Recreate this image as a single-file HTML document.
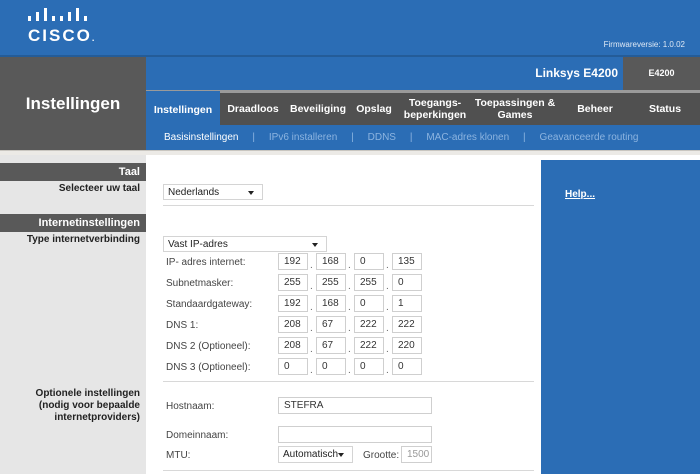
<!DOCTYPE html>
<html><head><meta charset="utf-8"><style>
*{margin:0;padding:0;box-sizing:border-box}
body{width:700px;height:474px;overflow:hidden;background:#fff;font-family:"Liberation Sans",Arial,sans-serif;position:relative}
.a{position:absolute}
.top{left:0;top:0;width:700px;height:55px;background:#2b6db5}
.inp{position:absolute;height:17px;border:1px solid #cfcfcf;background:#fff;font-size:10px;color:#333;padding:2px 0 0 5px}
.lbl{position:absolute;left:166px;font-size:10px;color:#444}
.dot{position:absolute;font-size:10px;color:#666}
.sel{position:absolute;height:16px;border:1px solid #d4d4d4;background:#fff;font-size:10px;color:#222;padding:2px 0 0 4px}
.sel:after{content:"";position:absolute;right:8px;top:6px;border:3px solid transparent;border-top:4px solid #222}
.hr{position:absolute;left:163px;width:371px;height:1px;background:#d8d8d8}
.nav{position:absolute;top:93px;height:32px;color:#fff;font-weight:bold;font-size:10.5px;text-align:center;display:flex;align-items:center;justify-content:center;line-height:12px}
</style></head><body>
<div class="a top"></div>
<div class="a" style="left:26px;top:7px;color:#fff">
<svg width="70" height="16" viewBox="0 0 70 16"><g fill="#fff"><rect x="2" y="9" width="3" height="5"/><rect x="10" y="5" width="3" height="9"/><rect x="18" y="1" width="3" height="13"/><rect x="26" y="9" width="3" height="5"/><rect x="34" y="9" width="3" height="5"/><rect x="42" y="5" width="3" height="9"/><rect x="50" y="1" width="3" height="13"/><rect x="58" y="9" width="3" height="5"/></g></svg>
<div style="font-size:17px;font-weight:bold;letter-spacing:2px;margin-top:-2px;margin-left:2px">CISCO<span style="font-size:9px">.</span></div></div>
<div class="a" style="right:15px;top:40px;font-size:8px;color:#dfe9f5">Firmwareversie: 1.0.02</div>
<div class="a" style="left:0;top:55px;width:700px;height:2px;background:#245c98"></div>
<div class="a" style="left:0;top:57px;width:146px;height:93px;background:#595959"></div>
<div class="a" style="left:0;top:94px;width:146px;text-align:center;color:#fff;font-weight:bold;font-size:17px">Instellingen</div>
<div class="a" style="left:146px;top:57px;width:477px;height:34px;background:#2b6db5"></div>
<div class="a" style="left:623px;top:57px;width:77px;height:34px;background:#595959;color:#fff;font-size:9px;font-weight:bold;text-align:center;line-height:32px">E4200</div>
<div class="a" style="left:450px;top:66px;width:168px;text-align:right;color:#fff;font-weight:bold;font-size:12px">Linksys E4200</div>
<div class="a" style="left:146px;top:90px;width:554px;height:3px;background:#9a9a9a"></div>
<div class="a" style="left:146px;top:93px;width:554px;height:32px;background:#505050"></div>
<div class="nav" style="left:146px;width:74px;background:#2b6db5;top:91px;height:34px;padding-top:4px">Instellingen</div>
<div class="nav" style="left:222px;width:62px">Draadloos</div>
<div class="nav" style="left:286px;width:64px">Beveiliging</div>
<div class="nav" style="left:352px;width:44px">Opslag</div>
<div class="nav" style="left:400px;width:70px">Toegangs-<br>beperkingen</div>
<div class="nav" style="left:472px;width:86px">Toepassingen &amp;<br>Games</div>
<div class="nav" style="left:560px;width:70px">Beheer</div>
<div class="nav" style="left:632px;width:66px">Status</div>
<div class="a" style="left:146px;top:125px;width:554px;height:25px;background:#2b6db5;font-size:10px;color:#8cb4e0;line-height:25px;padding-left:18px;white-space:pre"><span style="color:#fff">Basisinstellingen</span>     |     IPv6 installeren     |     DDNS     |     MAC-adres klonen     |     Geavanceerde routing</div>
<div class="a" style="left:0;top:150px;width:700px;height:5px;background:#eceae6;border-top:1px solid #c9c6c0"></div>
<div class="a" style="left:0;top:155px;width:146px;height:319px;background:#e6e6e6"></div>
<div class="a" style="left:541px;top:160px;width:159px;height:314px;background:#2b6db5"></div>
<div class="a" style="left:565px;top:189px;font-size:10px;font-weight:bold;color:#fff;text-decoration:underline">Help...</div>
<div class="a" style="left:0;top:163px;width:146px;height:18px;background:#595959;color:#fff;font-weight:bold;font-size:11px;text-align:right;padding:3px 6px 0 0">Taal</div>
<div class="a" style="left:0;top:183px;width:140px;text-align:right;font-size:10px;font-weight:bold;color:#222">Selecteer uw taal</div>
<div class="a" style="left:0;top:214px;width:146px;height:18px;background:#595959;color:#fff;font-weight:bold;font-size:11px;text-align:right;padding:3px 6px 0 0">Internetinstellingen</div>
<div class="a" style="left:0;top:234px;width:140px;text-align:right;font-size:10px;font-weight:bold;color:#222">Type internetverbinding</div>
<div class="a" style="left:0;top:388px;width:140px;text-align:right;font-size:10px;font-weight:bold;color:#222;line-height:12px">Optionele instellingen<br>(nodig voor bepaalde<br>internetproviders)</div>
<div class="sel" style="left:163px;top:184px;width:100px">Nederlands</div>
<div class="hr" style="top:205px"></div>
<div class="sel" style="left:163px;top:236px;width:164px">Vast IP-adres</div>
<div class="lbl" style="top:257px">IP- adres internet:</div>
<div class="lbl" style="top:278px">Subnetmasker:</div>
<div class="lbl" style="top:299px">Standaardgateway:</div>
<div class="lbl" style="top:320px">DNS 1:</div>
<div class="lbl" style="top:341px">DNS 2 (Optioneel):</div>
<div class="lbl" style="top:362px">DNS 3 (Optioneel):</div>
<div class="hr" style="top:381px"></div>
<div class="lbl" style="top:401px">Hostnaam:</div>
<div class="inp" style="left:278px;top:397px;width:154px">STEFRA</div>
<div class="lbl" style="top:430px">Domeinnaam:</div>
<div class="inp" style="left:278px;top:426px;width:154px"></div>
<div class="lbl" style="top:450px">MTU:</div>
<div class="sel" style="left:278px;top:446px;width:75px;height:17px">Automatisch</div>
<div class="a" style="left:363px;top:450px;font-size:10px;color:#444">Grootte:</div>
<div class="inp" style="left:401px;top:446px;width:31px;color:#999">1500</div>
<div class="hr" style="top:470px"></div>
<div class="inp" style="left:278px;top:253px;width:30px">192</div><div class="inp" style="left:316px;top:253px;width:30px">168</div><div class="inp" style="left:354px;top:253px;width:30px">0</div><div class="inp" style="left:392px;top:253px;width:30px">135</div>
<div class="inp" style="left:278px;top:274px;width:30px">255</div><div class="inp" style="left:316px;top:274px;width:30px">255</div><div class="inp" style="left:354px;top:274px;width:30px">255</div><div class="inp" style="left:392px;top:274px;width:30px">0</div>
<div class="inp" style="left:278px;top:295px;width:30px">192</div><div class="inp" style="left:316px;top:295px;width:30px">168</div><div class="inp" style="left:354px;top:295px;width:30px">0</div><div class="inp" style="left:392px;top:295px;width:30px">1</div>
<div class="inp" style="left:278px;top:316px;width:30px">208</div><div class="inp" style="left:316px;top:316px;width:30px">67</div><div class="inp" style="left:354px;top:316px;width:30px">222</div><div class="inp" style="left:392px;top:316px;width:30px">222</div>
<div class="inp" style="left:278px;top:337px;width:30px">208</div><div class="inp" style="left:316px;top:337px;width:30px">67</div><div class="inp" style="left:354px;top:337px;width:30px">222</div><div class="inp" style="left:392px;top:337px;width:30px">220</div>
<div class="inp" style="left:278px;top:358px;width:30px">0</div><div class="inp" style="left:316px;top:358px;width:30px">0</div><div class="inp" style="left:354px;top:358px;width:30px">0</div><div class="inp" style="left:392px;top:358px;width:30px">0</div>
<div class="dot" style="left:310px;top:260px">.</div><div class="dot" style="left:348px;top:260px">.</div><div class="dot" style="left:386px;top:260px">.</div>
<div class="dot" style="left:310px;top:281px">.</div><div class="dot" style="left:348px;top:281px">.</div><div class="dot" style="left:386px;top:281px">.</div>
<div class="dot" style="left:310px;top:302px">.</div><div class="dot" style="left:348px;top:302px">.</div><div class="dot" style="left:386px;top:302px">.</div>
<div class="dot" style="left:310px;top:323px">.</div><div class="dot" style="left:348px;top:323px">.</div><div class="dot" style="left:386px;top:323px">.</div>
<div class="dot" style="left:310px;top:344px">.</div><div class="dot" style="left:348px;top:344px">.</div><div class="dot" style="left:386px;top:344px">.</div>
<div class="dot" style="left:310px;top:365px">.</div><div class="dot" style="left:348px;top:365px">.</div><div class="dot" style="left:386px;top:365px">.</div>
</body></html>
